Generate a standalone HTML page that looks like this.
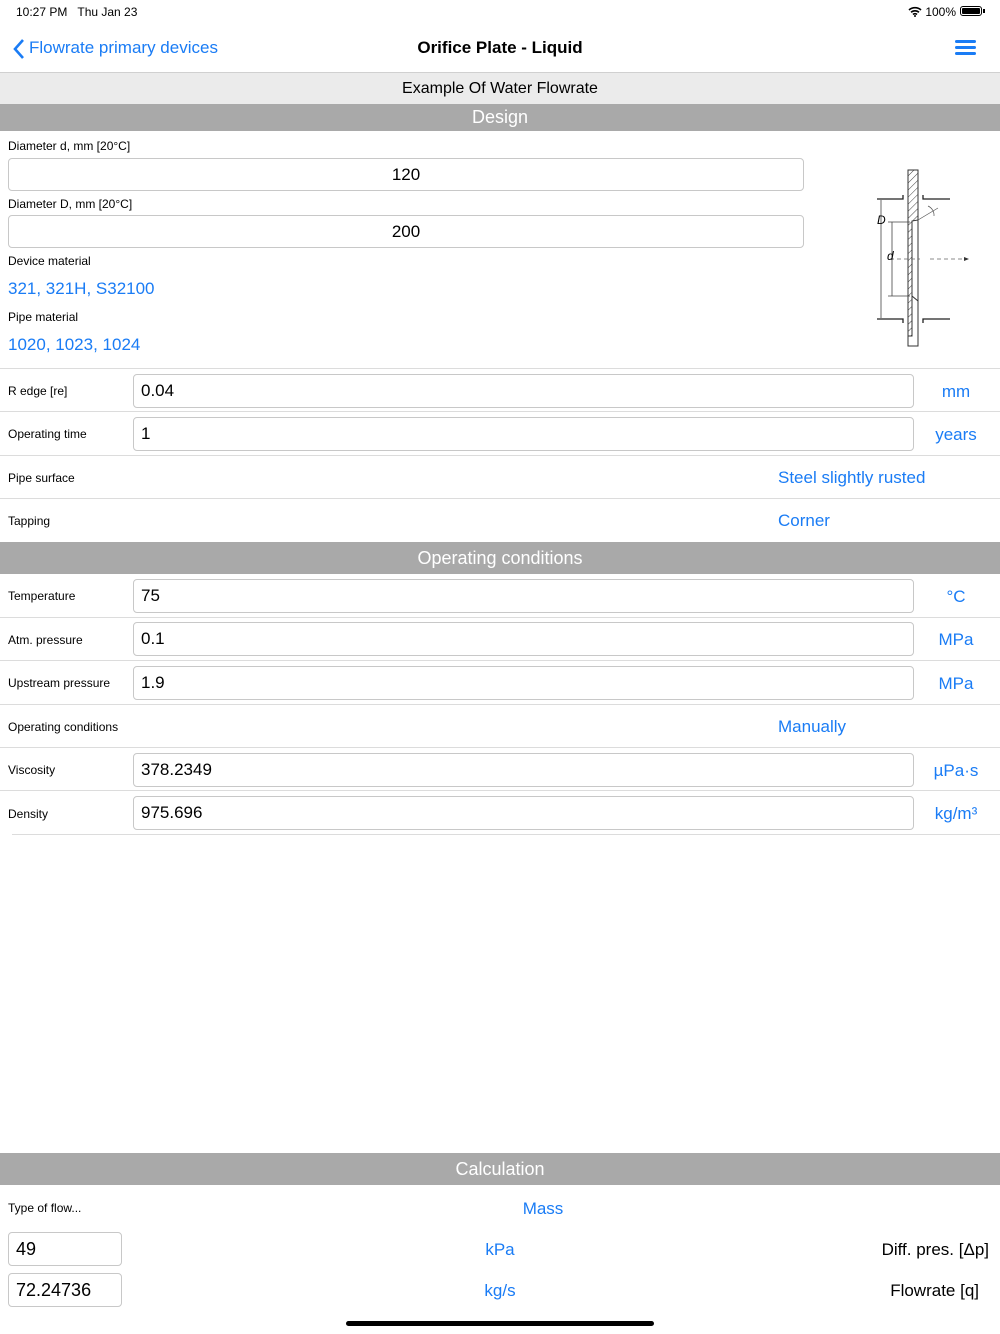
<!DOCTYPE html><html><head><meta charset="utf-8"><style>
body{margin:0;width:1000px;height:1334px;background:#fff;font-family:"Liberation Sans",sans-serif;position:relative;overflow:hidden;color:#000}
.a{position:absolute}
.blue{color:#1a7cf5}
.sec{position:absolute;left:0;width:1000px;background:#a9a9a9;color:#fff;text-align:center;font-size:18px}
.inp{position:absolute;border:1px solid #c8c8c8;border-radius:4px;background:#fff;box-sizing:border-box;font-size:17px;padding-left:7px}
.lbl{position:absolute;left:8px;font-size:12px}
.hr{position:absolute;left:0;width:1000px;height:1px;background:#dcdcdc}
.unit{position:absolute;width:86px;left:913px;text-align:center;font-size:17px;color:#1a7cf5}
</style></head><body>
<div class="a" style="left:16px;top:5px;font-size:12px">10:27 PM&nbsp;&nbsp;&nbsp;Thu Jan 23</div>
<div class="a" style="left:908px;top:5px;font-size:12px">
<svg width="14" height="11" viewBox="0 0 14 11" style="vertical-align:-1px"><path d="M1 4a9 9 0 0 1 12 0M3 6.3a6 6 0 0 1 8 0M5 8.5a3 3 0 0 1 4 0" stroke="#000" stroke-width="1.6" fill="none"/><circle cx="7" cy="10" r="1" /></svg> 100%</div>
<div class="a" style="left:960px;top:6px;width:22px;height:10px;border:1px solid #000;border-radius:3px;box-sizing:border-box;padding:1px"><div style="background:#000;height:100%;border-radius:1px"></div></div>
<div class="a" style="left:983px;top:9px;width:2px;height:4px;background:#000"></div>
<svg class="a" style="left:12px;top:38px" width="14" height="22"><path d="M11 2L3 11l8 9" stroke="#1a7cf5" stroke-width="2.6" fill="none"/></svg>
<div class="a blue" style="left:29px;top:38px;font-size:17px">Flowrate primary devices</div>
<div class="a" style="left:0;width:1000px;top:38px;text-align:center;font-size:17px;font-weight:bold">Orifice Plate - Liquid</div>
<div class="a" style="left:955px;top:40px;width:21px;height:3px;background:#1a7cf5;border-radius:2px"></div>
<div class="a" style="left:955px;top:46px;width:21px;height:3px;background:#1a7cf5;border-radius:2px"></div>
<div class="a" style="left:955px;top:52px;width:21px;height:3px;background:#1a7cf5;border-radius:2px"></div>
<div class="a" style="left:0;top:72px;width:1000px;height:32px;background:#ebebeb;border-top:1px solid #d0d0d0;box-sizing:border-box;text-align:center;font-size:16px;line-height:32px">Example Of Water Flowrate</div>
<div class="sec" style="top:104px;height:27px;line-height:27px">Design</div>
<div class="lbl" style="top:139px">Diameter d, mm [20°C]</div>
<div class="inp" style="left:8px;top:158px;width:796px;height:33px;line-height:31px;text-align:center;padding:0">120</div>
<div class="lbl" style="top:197px">Diameter D, mm [20°C]</div>
<div class="inp" style="left:8px;top:215px;width:796px;height:33px;line-height:31px;text-align:center;padding:0">200</div>
<div class="lbl" style="top:254px">Device material</div>
<div class="a blue" style="left:8px;top:279px;font-size:17px">321, 321H, S32100</div>
<div class="lbl" style="top:310px">Pipe material</div>
<div class="a blue" style="left:8px;top:335px;font-size:17px">1020, 1023, 1024</div>
<svg class="a" style="left:860px;top:160px" width="120" height="200">
<defs><pattern id="h" width="5" height="5" patternUnits="userSpaceOnUse" patternTransform="rotate(45)"><line x1="0" y1="0" x2="0" y2="5" stroke="#444" stroke-width="1"/></pattern></defs>
<path d="M48 10h10v50l-6 1v115h-4z" fill="url(#h)" stroke="#333"/>
<path d="M52 61v75l6 5v45h-10V10" fill="none" stroke="#333"/>
<rect x="48" y="10" width="10" height="176" fill="none" stroke="#333"/>
<path d="M17 39h26v-4M63 35v4h27M17 159h26v4M63 163v-4h27" stroke="#222" stroke-width="1.3" fill="none"/>
<path d="M21 40v118M32 62v74M28 62h22M28 136h22" stroke="#444" fill="none" stroke-width=".8"/>
<path d="M58 60l20-12M68 46a10 10 0 0 1 6 10" stroke="#555" fill="none" stroke-width=".7"/>
<path d="M30 99h30M70 99h36" stroke="#666" stroke-dasharray="4 3" stroke-width=".8"/>
<path d="M104 97l5 2-5 2z" fill="#333"/>
<text x="17" y="64" font-size="12" font-style="italic" font-family="Liberation Sans">D</text>
<text x="27" y="100" font-size="12" font-style="italic" font-family="Liberation Sans">d</text>
</svg>
<div class="hr" style="top:368px"></div>
<div class="lbl" style="top:384px">R edge [re]</div>
<div class="inp" style="left:133px;top:374px;width:781px;height:34px;line-height:32px">0.04</div>
<div class="unit" style="top:382px">mm</div>
<div class="hr" style="top:411px"></div>
<div class="lbl" style="top:427px">Operating time</div>
<div class="inp" style="left:133px;top:417px;width:781px;height:34px;line-height:32px">1</div>
<div class="unit" style="top:425px">years</div>
<div class="hr" style="top:455px"></div>
<div class="lbl" style="top:471px">Pipe surface</div>
<div class="a blue" style="left:778px;top:468px;font-size:17px">Steel slightly rusted</div>
<div class="hr" style="top:498px"></div>
<div class="lbl" style="top:514px">Tapping</div>
<div class="a blue" style="left:778px;top:511px;font-size:17px">Corner</div>
<div class="sec" style="top:542px;height:32px;line-height:32px">Operating conditions</div>
<div class="lbl" style="top:589px">Temperature</div>
<div class="inp" style="left:133px;top:579px;width:781px;height:34px;line-height:32px">75</div>
<div class="unit" style="top:587px">°C</div>
<div class="hr" style="top:617px"></div>
<div class="lbl" style="top:633px">Atm. pressure</div>
<div class="inp" style="left:133px;top:622px;width:781px;height:34px;line-height:32px">0.1</div>
<div class="unit" style="top:630px">MPa</div>
<div class="hr" style="top:660px"></div>
<div class="lbl" style="top:676px">Upstream pressure</div>
<div class="inp" style="left:133px;top:666px;width:781px;height:34px;line-height:32px">1.9</div>
<div class="unit" style="top:674px">MPa</div>
<div class="hr" style="top:704px"></div>
<div class="lbl" style="top:720px">Operating conditions</div>
<div class="a blue" style="left:778px;top:717px;font-size:17px">Manually</div>
<div class="hr" style="top:747px"></div>
<div class="lbl" style="top:763px">Viscosity</div>
<div class="inp" style="left:133px;top:753px;width:781px;height:34px;line-height:32px">378.2349</div>
<div class="unit" style="top:761px">µPa·s</div>
<div class="hr" style="top:790px"></div>
<div class="lbl" style="top:807px">Density</div>
<div class="inp" style="left:133px;top:796px;width:781px;height:34px;line-height:32px">975.696</div>
<div class="unit" style="top:804px">kg/m³</div>
<div class="hr" style="top:834px;left:12px;width:988px"></div>
<div class="sec" style="top:1153px;height:32px;line-height:32px">Calculation</div>
<div class="lbl" style="top:1201px">Type of flow...</div>
<div class="a blue" style="left:0;width:1086px;text-align:center;top:1199px;font-size:17px">Mass</div>
<div class="inp" style="left:8px;top:1232px;width:114px;height:34px;line-height:32px;font-size:18px">49</div>
<div class="a blue" style="left:0;width:1000px;text-align:center;top:1240px;font-size:17px">kPa</div>
<div class="a" style="right:11px;top:1240px;font-size:17px">Diff. pres. [Δp]</div>
<div class="inp" style="left:8px;top:1273px;width:114px;height:34px;line-height:32px;font-size:18px">72.24736</div>
<div class="a blue" style="left:0;width:1000px;text-align:center;top:1281px;font-size:17px">kg/s</div>
<div class="a" style="right:21px;top:1281px;font-size:17px">Flowrate [q]</div>
<div class="a" style="left:346px;top:1321px;width:308px;height:5px;border-radius:3px;background:#000"></div>
</body></html>
